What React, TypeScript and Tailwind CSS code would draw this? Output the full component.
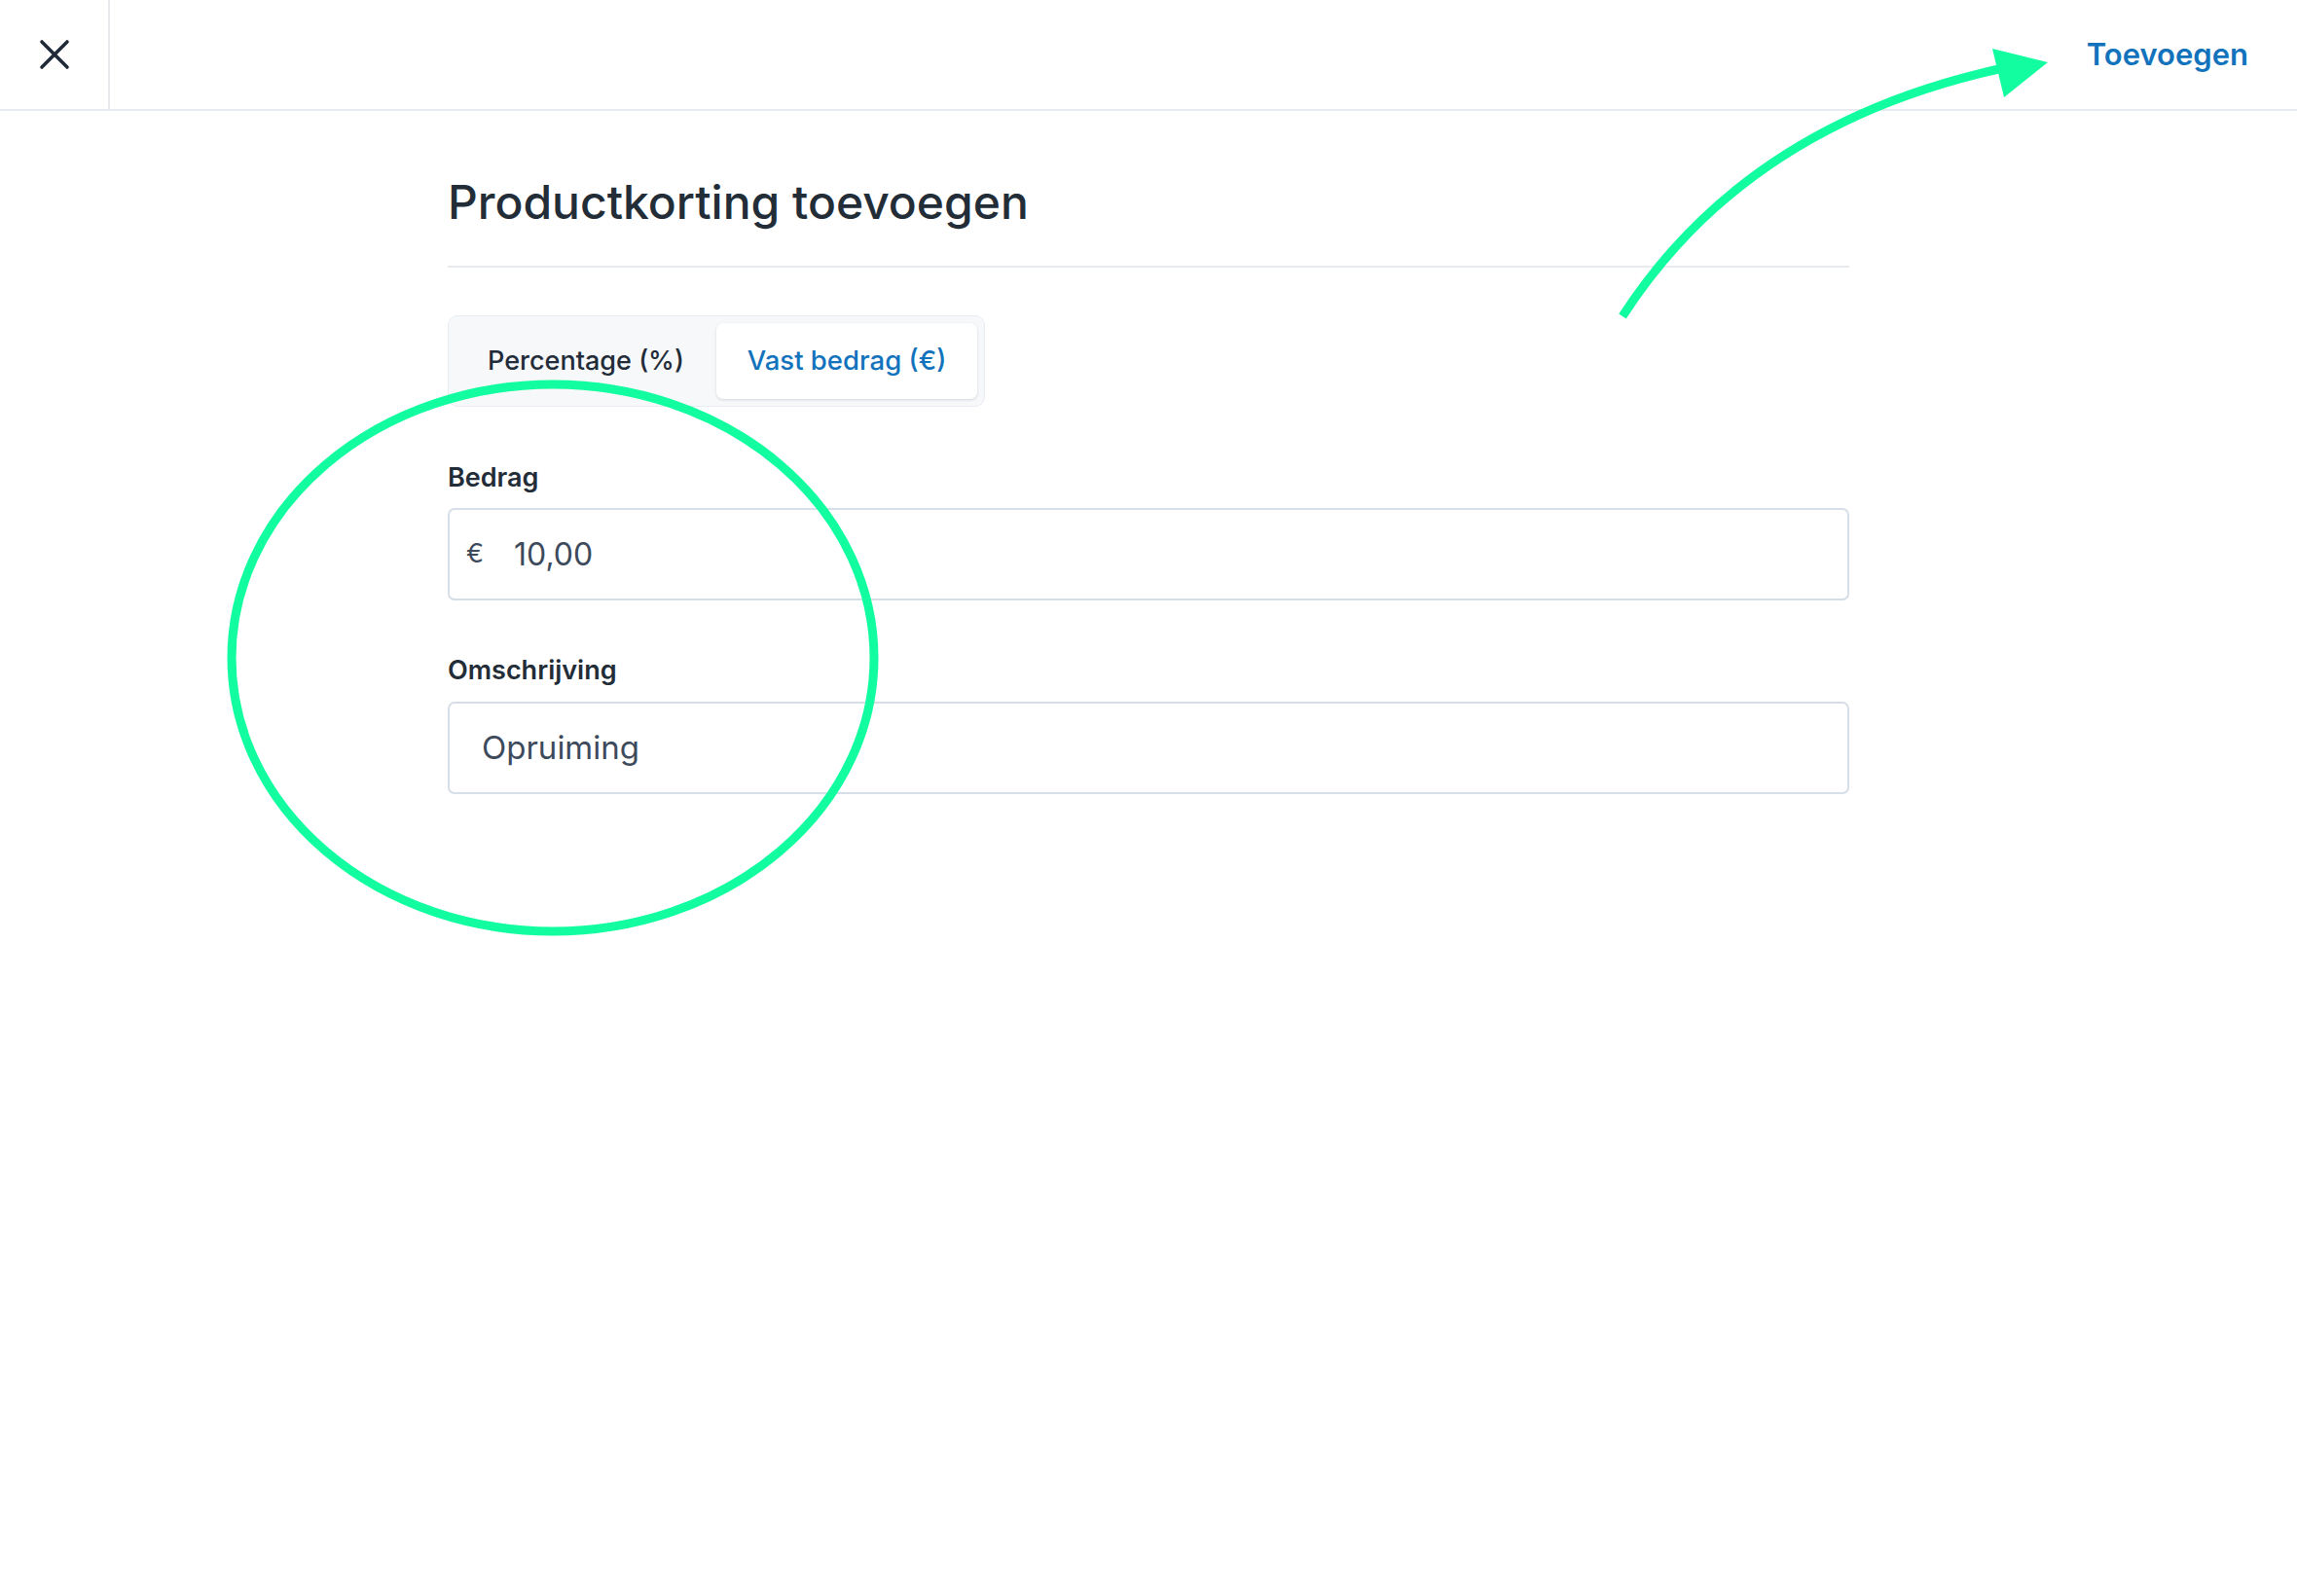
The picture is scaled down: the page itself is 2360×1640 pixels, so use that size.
import { useState } from "react";

const font = { fontFamily: "Inter, 'Noto Sans', sans-serif" };

function CloseIcon() {
  return (
    <svg width="32" height="32" viewBox="0 0 32 32" fill="none">
      <path
        d="M3 3 L29 29 M29 3 L3 29"
        stroke="#1f2a37"
        strokeWidth="3.6"
        strokeLinecap="round"
      />
    </svg>
  );
}

function Annotations() {
  return (
    <svg
      className="pointer-events-none absolute left-0 top-0"
      width="2360"
      height="1640"
      viewBox="0 0 2360 1640"
      fill="none"
    >
      <ellipse
        cx="568"
        cy="676"
        rx="330"
        ry="281"
        stroke="#12fda0"
        strokeWidth="9"
      />
      <path
        d="M1667 325 Q1795 127 2058 70"
        stroke="#12fda0"
        strokeWidth="9"
      />
      <polygon points="2047,50 2104,64 2059,100" fill="#12fda0" />
    </svg>
  );
}

export default function App() {
  const [mode, setMode] = useState<"percent" | "fixed">("fixed");

  const tabClass = (active: boolean) =>
    active
      ? "flex h-[78px] w-[268px] items-center justify-center rounded-[7px] bg-white text-[27.5px] font-medium text-[#1273bc] shadow-[0_1px_3px_rgba(30,40,60,0.16)]"
      : "flex h-[78px] w-[268px] items-center justify-center rounded-[7px] text-[27px] font-medium text-[#222c38]";

  return (
    <div className="relative min-h-screen w-full bg-white" style={font}>
      <header className="flex h-[114px] border-b-2 border-[#e7ebef]">
        <button
          type="button"
          className="flex w-[113px] items-center justify-center border-r-2 border-[#e7ebef]"
        >
          <CloseIcon />
        </button>
        <div className="flex flex-1 items-center justify-end pr-[50px]">
          <button
            type="button"
            className="text-[31px] font-semibold text-[#1273bc]"
          >
            Toevoegen
          </button>
        </div>
      </header>

      <main className="mx-auto w-[1440px] pt-[66px]">
        <h1 className="border-b-2 border-[#e8ecf0] pb-[37px] text-[48px] font-medium leading-[56px] text-[#232d38]">
          Productkorting toevoegen
        </h1>

        <div className="mt-[49px] inline-flex rounded-[10px] border border-[#e9ecf0] bg-[#f7f8fa] p-[7px]">
          <button
            type="button"
            className={tabClass(mode === "percent")}
            onClick={() => setMode("percent")}
          >
            Percentage (%)
          </button>
          <button
            type="button"
            className={tabClass(mode === "fixed")}
            onClick={() => setMode("fixed")}
          >
            Vast bedrag (€)
          </button>
        </div>

        <label className="mt-[55px] block text-[27px] font-semibold leading-[36px] text-[#232d38]">
          Bedrag
        </label>
        <div className="mt-[13px] flex h-[95px] items-center rounded-[7px] border-2 border-[#d6dee7] pl-[17px]">
          <span className="w-[49px] text-[27px] text-[#3d4a5c]">€</span>
          <span className="text-[32px] text-[#3d4a5c]">10,00</span>
        </div>

        <label className="mt-[54px] block text-[27px] font-semibold leading-[36px] text-[#232d38]">
          Omschrijving
        </label>
        <div className="mt-[14px] flex h-[95px] items-center rounded-[7px] border-2 border-[#d6dee7] pl-[33px]">
          <span className="text-[33px] text-[#3d4a5c]">Opruiming</span>
        </div>
      </main>

      <Annotations />
    </div>
  );
}
